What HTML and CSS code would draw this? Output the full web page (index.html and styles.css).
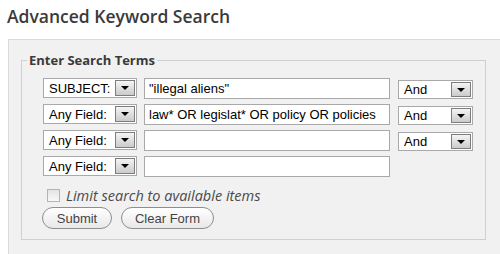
FILE: index.html
```html
<!DOCTYPE html>
<html lang="en">
<head>
  <meta charset="UTF-8">
  <title>Advanced Keyword Search</title>
  <link rel="stylesheet" href="styles.css">
</head>
<body>

<h2 class="page-title">Advanced Keyword Search</h2>

<div class="panel">
  <fieldset class="terms">
    <legend>Enter Search Terms</legend>

    <div class="row">
      <div class="select-box field">
        <span class="select-text">SUBJECT:</span>
        <span class="arrow"></span>
      </div>
      <input type="text" class="term" value="&quot;illegal aliens&quot;">
      <div class="select-box bool">
        <span class="select-text">And</span>
        <span class="arrow"></span>
      </div>
    </div>

    <div class="row">
      <div class="select-box field">
        <span class="select-text">Any Field:</span>
        <span class="arrow"></span>
      </div>
      <input type="text" class="term" value="law* OR legislat* OR policy OR policies">
      <div class="select-box bool">
        <span class="select-text">And</span>
        <span class="arrow"></span>
      </div>
    </div>

    <div class="row">
      <div class="select-box field">
        <span class="select-text">Any Field:</span>
        <span class="arrow"></span>
      </div>
      <input type="text" class="term" value="">
      <div class="select-box bool">
        <span class="select-text">And</span>
        <span class="arrow"></span>
      </div>
    </div>

    <div class="row">
      <div class="select-box field">
        <span class="select-text">Any Field:</span>
        <span class="arrow"></span>
      </div>
      <input type="text" class="term" value="">
    </div>

    <label class="limit">
      <span class="checkbox"></span>
      Limit search to available items
    </label>

    <div class="buttons">
      <button class="pill submit">Submit</button>
      <button class="pill clear">Clear Form</button>
    </div>
  </fieldset>
</div>

</body>
</html>
```

FILE: styles.css
```css
body {
  margin: 0;
  background: #fff;
  font-family: "Open Sans", "DejaVu Sans", sans-serif;
  color: #333;
  overflow: hidden;
}

.page-title {
  margin: 0;
  padding: 4px 7px 0;
  height: 35px;
  font-size: 17.5px;
  font-weight: 600;
  line-height: 24px;
  color: #3a3a3a;
}

.panel {
  margin-left: 8px;
  height: 215px;
  background: #f1f1f1;
  border: 1px solid #dadada;
  border-right: none;
  border-bottom: none;
  padding: 11px 0 0 12px;
  box-sizing: border-box;
}

.terms {
  width: 465px;
  margin: 0;
  padding: 0 0 10px 21px;
  border: 1px solid #d0d0d0;
  box-sizing: border-box;
}

.terms legend {
  margin-left: -16px;
  padding: 0 2px;
  font-size: 13px;
  font-weight: 700;
  line-height: 18px;
  color: #3a3a3a;
}

.row {
  display: flex;
  align-items: flex-start;
  margin-top: 5px;
  height: 21px;
}
.terms legend + .row { margin-top: 9px; }

.select-box {
  display: flex;
  align-items: center;
  justify-content: space-between;
  height: 20px;
  box-sizing: border-box;
  background: #fff;
  border: 1px solid #a9a9a9;
  font-family: "Liberation Sans", Arial, sans-serif;
  font-size: 13px;
  color: #000;
  padding: 0 1px 0 5px;
}
.select-box.field { width: 94px; margin-right: 7px; }
.select-box.bool { width: 75px; margin-left: 8px; margin-top: 2px; height: 19px; }

.arrow {
  position: relative;
  width: 20px;
  height: 16px;
  box-sizing: border-box;
  border: 1px solid #7d7d7d;
  background: linear-gradient(#f4f4f4, #cbcbcb);
}
.arrow::after {
  content: "";
  position: absolute;
  left: 5px;
  top: 5px;
  border-left: 4px solid transparent;
  border-right: 4px solid transparent;
  border-top: 4px solid #000;
}
.select-box.bool .arrow { height: 15px; }

.term {
  width: 246px;
  height: 21px;
  margin: 0;
  padding: 0 4px;
  box-sizing: border-box;
  border: 1px solid #a9a9a9;
  background: #fff;
  font-family: "Liberation Sans", Arial, sans-serif;
  font-size: 13px;
  color: #000;
  outline: none;
}

.limit {
  display: flex;
  align-items: center;
  margin: 10px 0 0 4px;
  height: 16px;
  font-size: 14.5px;
  font-style: italic;
  color: #4a4a4a;
}
.checkbox {
  width: 13px;
  height: 13px;
  box-sizing: border-box;
  border: 1px solid #b4b4b4;
  background: linear-gradient(#e4e4e4, #f8f8f8);
  margin-right: 6px;
}

.buttons {
  display: flex;
  gap: 9px;
  margin: 4px 0 0 -1px;
}
.pill {
  height: 22px;
  padding: 0;
  border: 1px solid #8e8e8e;
  border-radius: 11px;
  background: linear-gradient(#ffffff, #e8e8e8);
  font-family: "Liberation Sans", Arial, sans-serif;
  font-size: 13px;
  color: #444;
  cursor: pointer;
}
.pill.submit { width: 70px; }
.pill.clear { width: 93px; }
```
